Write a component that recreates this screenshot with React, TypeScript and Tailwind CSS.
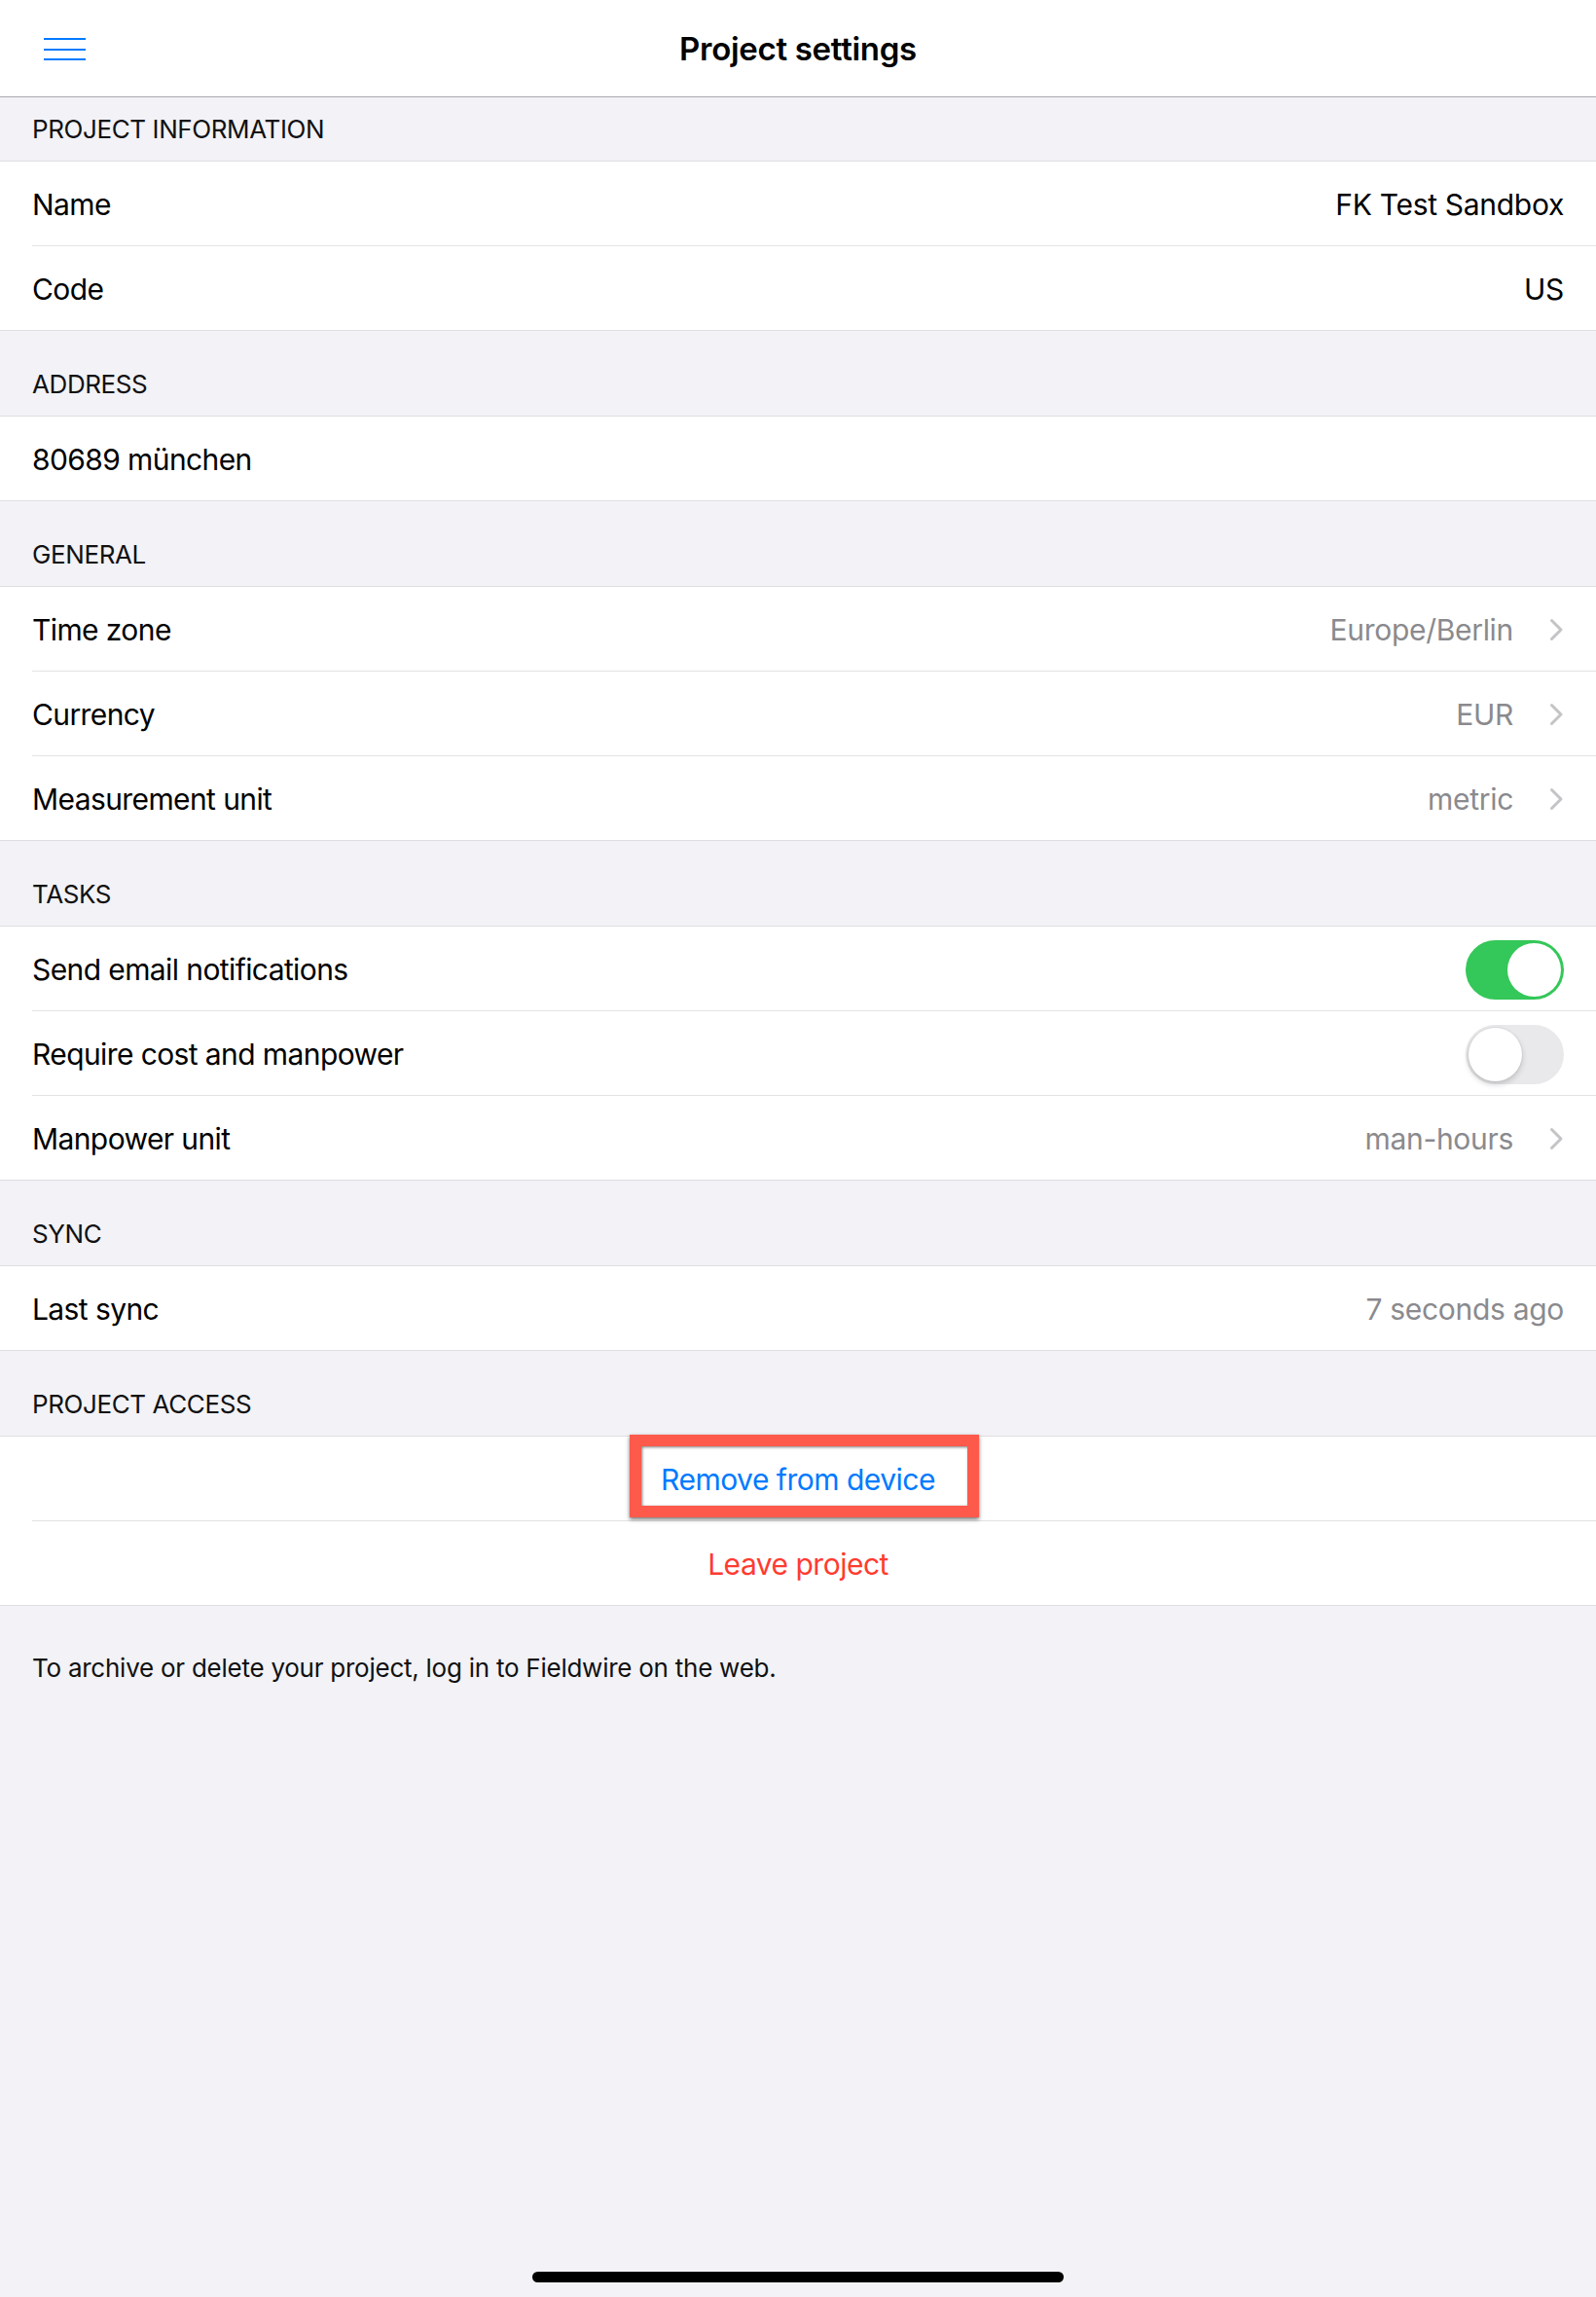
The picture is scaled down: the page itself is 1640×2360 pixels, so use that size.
import React from 'react';

const Chevron = () => (
  <svg width="16" height="24" viewBox="0 0 16 24" fill="none" className="ml-[36px] shrink-0">
    <path d="M3.5 2.5 L13 12 L3.5 21.5" stroke="#c4c4c7" strokeWidth="3" strokeLinecap="round" strokeLinejoin="round" />
  </svg>
);

const Toggle = ({ on }: { on: boolean }) => (
  <div
    className={`relative w-[101px] h-[61px] rounded-full ${on ? 'bg-[#34c759]' : 'bg-[#e9e9eb]'}`}
  >
    <div
      className={`absolute top-[3px] w-[55px] h-[55px] rounded-full bg-white ${
        on ? 'right-[3px]' : 'left-[3px] shadow-[0_3px_6px_rgba(0,0,0,0.18),0_0_0_1px_rgba(0,0,0,0.04)]'
      }`}
    />
  </div>
);

const SectionHeader = ({ title, first }: { title: string; first?: boolean }) => (
  <div
    className={`${first ? 'h-[66px]' : 'h-[88px]'} flex items-end pb-[19px] pl-[33px] border-b border-[#dedee2] bg-[#f2f2f7]`}
  >
    <span className="text-[26px] leading-none text-[#111] tracking-[-0.4px]">{title}</span>
  </div>
);

type RowProps = {
  label?: string;
  value?: string;
  chevron?: boolean;
  toggle?: boolean;
  last?: boolean;
  children?: React.ReactNode;
};

const Row = ({ label, value, chevron, toggle, last, children }: RowProps) => (
  <div className={`relative h-[87px] bg-white ${last ? 'border-b border-[#dedee2]' : 'pl-[33px]'}`}>
    <div
      className={`h-full flex items-center pr-[33px] pt-[2px] ${
        last ? 'pl-[33px]' : 'border-b border-[#e3e3e6]'
      }`}
    >
      {children ?? (
        <>
          <span className="flex-1 text-[30px] text-black tracking-[-0.6px]">{label}</span>
          {value && (
            <span className={`text-[30px] ${chevron || value === '7 seconds ago' ? 'text-[#8a8a8e]' : 'text-black'}`}>
              {value}
            </span>
          )}
          {chevron && <Chevron />}
          {toggle !== undefined && <Toggle on={toggle} />}
        </>
      )}
    </div>
  </div>
);

export default function App() {
  return (
    <div className="min-h-[2360px] flex flex-col bg-[#f2f2f7] font-['Inter','Noto_Sans',sans-serif] tracking-[-0.3px]">
      {/* Nav bar */}
      <header className="h-[100px] bg-white border-b border-[#a9a9ad] flex items-center relative">
        <button className="absolute left-[45px] top-[39px] w-[43px] h-[23px] flex flex-col justify-between">
          <span className="block h-[2px] w-full bg-[#007aff]" />
          <span className="block h-[2px] w-full bg-[#007aff]" />
          <span className="block h-[2px] w-full bg-[#007aff]" />
        </button>
        <h1 className="flex-1 text-center text-[33px] font-semibold text-black pt-[2px]">Project settings</h1>
      </header>

      <SectionHeader title="PROJECT INFORMATION" first />
      <Row label="Name" value="FK Test Sandbox" />
      <Row label="Code" value="US" last />

      <SectionHeader title="ADDRESS" />
      <Row label="80689 münchen" last />

      <SectionHeader title="GENERAL" />
      <Row label="Time zone" value="Europe/Berlin" chevron />
      <Row label="Currency" value="EUR" chevron />
      <Row label="Measurement unit" value="metric" chevron last />

      <SectionHeader title="TASKS" />
      <Row label="Send email notifications" toggle={true} />
      <Row label="Require cost and manpower" toggle={false} />
      <Row label="Manpower unit" value="man-hours" chevron last />

      <SectionHeader title="SYNC" />
      <Row label="Last sync" value="7 seconds ago" last />

      <SectionHeader title="PROJECT ACCESS" />
      <Row>
        <span className="flex-1 text-center text-[30px] text-[#007aff] tracking-[-0.5px]">Remove from device</span>
      </Row>
      <Row last>
        <span className="flex-1 text-center text-[30px] text-[#ff3b30] tracking-[-0.5px]">Leave project</span>
      </Row>

      {/* Annotation box over "Remove from device" */}
      <div className="relative h-0">
        <div className="absolute left-[647px] top-[-176px] w-[359px] h-[85px] border-[12px] border-[#fd5a4b] shadow-[0_2px_4px_rgba(0,0,0,0.55),inset_1px_1px_3px_rgba(0,0,0,0.5)]" />
      </div>

      <p className="pt-[44px] pl-[33px] text-[26px] text-[#111] tracking-[-0.25px]">
        To archive or delete your project, log in to Fieldwire on the web.
      </p>

      <div className="flex-1" />
      <div className="flex justify-center pb-[15px]">
        <div className="w-[546px] h-[11px] rounded-full bg-black" />
      </div>
    </div>
  );
}
